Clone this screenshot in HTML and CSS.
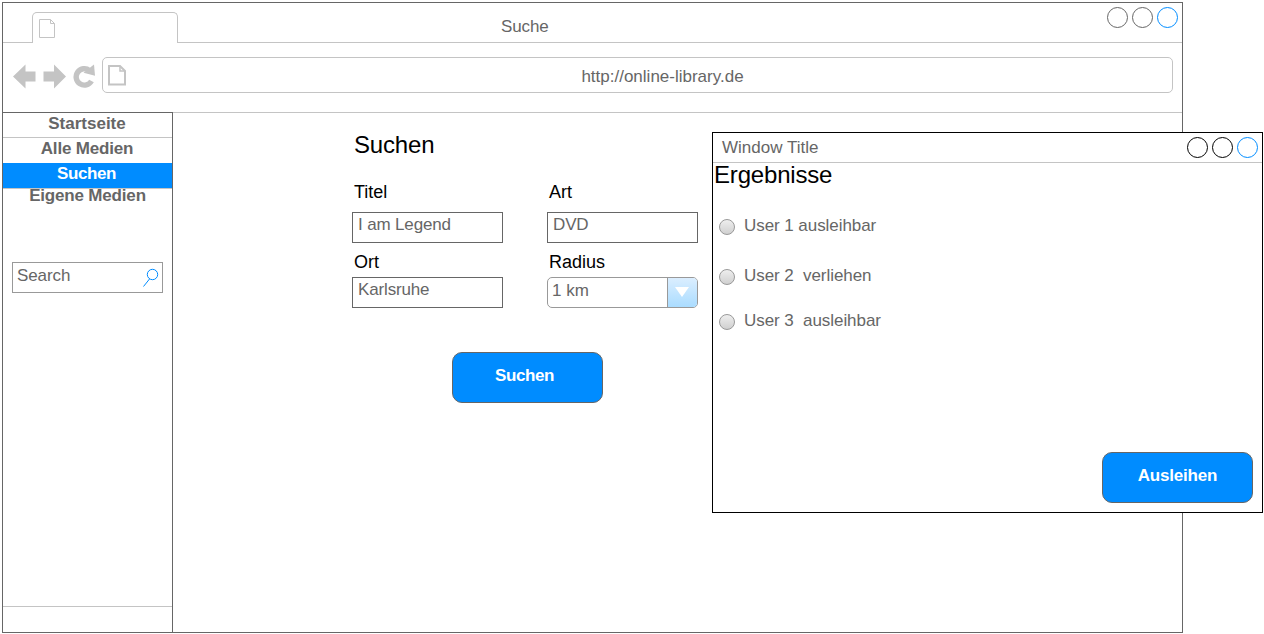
FILE: index.html
```html
<!DOCTYPE html>
<html lang="de">
<head>
<meta charset="utf-8">
<title>Suche</title>
<link rel="stylesheet" href="styles.css">
</head>
<body>
<div class="browser">
  <header class="tabbar">
    <div class="tab-gap"></div>
    <div class="tab">
      <svg width="17" height="20" viewBox="0 0 17 20" fill="none" stroke="#c4c4c4"><path d="M.5.5h11l4 4v14h-15zM11.500.5v4h4"/><path d="m12 1 3 3"/></svg>
    </div>
    <div class="tab-rest">
      <span class="page-title">Suche</span>
      <svg class="controls" width="72" height="22" viewBox="0 0 72 22" fill="none" stroke="#666"><circle cx="11.500" cy="11.500" r="10"/><circle cx="36.500" cy="11.500" r="10"/><circle cx="61.500" cy="11.500" r="10" stroke="#008cff"/></svg>
    </div>
  </header>
  <div class="toolbar">
    <svg class="nav-icons" width="83" height="26" viewBox="0 0 83 26" fill="#c4c4c4">
      <path d="M0 13.500 12.500 1.500v7H22.500v10H12.500v7z"/>
      <path d="M53 13.500 41 1.500v7H30.500v10H41v7z"/>
      <path d="M78.500 18A8.200 8.200 0 1 1 76.500 7.500" fill="none" stroke="#c4c4c4" stroke-width="5.400"/>
      <path d="M81 1.500l1 11.200-11.500-3z"/>
    </svg>
    <div class="address">
      <svg width="18" height="21" viewBox="0 0 18 21" fill="none" stroke="#c4c4c4" stroke-width="2"><path d="M1 1h11l5 5v13.500H1z"/><path d="M12 1v5h5" stroke-width="1.500"/></svg>
      <span class="url">http://online-library.de</span>
    </div>
  </div>
  <div class="main">
    <nav class="sidebar">
      <a class="item first">Startseite</a>
      <a class="item">Alle Medien</a>
      <a class="item active">Suchen</a>
      <a class="item last">Eigene Medien</a>
      <div class="search">
        <span>Search</span>
        <svg width="16" height="20" viewBox="0 0 16 20" fill="none" stroke="#008cff"><circle cx="9.500" cy="6.500" r="5.200"/><path d="M6.500 11 .5 18.500"/></svg>
      </div>
      <div class="sidebar-foot"></div>
    </nav>
    <main class="content">
      <h1 class="heading">Suchen</h1>
      <div class="fields">
        <div class="field"><label class="label">Titel</label><div class="input">I am Legend</div></div>
        <div class="field"><label class="label">Art</label><div class="input">DVD</div></div>
        <div class="field tight"><label class="label">Ort</label><div class="input">Karlsruhe</div></div>
        <div class="field tight"><label class="label">Radius</label>
          <div class="select"><span class="value">1 km</span><span class="arrow"><svg width="14" height="10" viewBox="0 0 14 10" fill="#fff"><path d="M0 0h14L7 10z"/></svg></span></div>
        </div>
      </div>
      <div class="button find">Suchen</div>
    </main>
  </div>
</div>
<section class="window">
  <header class="window-bar">
    <span>Window Title</span>
    <svg class="window-controls" width="72" height="22" viewBox="0 0 72 22" fill="none" stroke="#000"><circle cx="11.500" cy="11.500" r="10"/><circle cx="36.500" cy="11.500" r="10"/><circle cx="61.500" cy="11.500" r="10" stroke="#008cff"/></svg>
  </header>
  <h2 class="result-title">Ergebnisse</h2>
  <div class="results">
    <div class="result"><i class="radio"></i><span>User 1 ausleihbar</span></div>
    <div class="result"><i class="radio"></i><span>User 2  verliehen</span></div>
    <div class="result third"><i class="radio"></i><span>User 3  ausleihbar</span></div>
  </div>
  <div class="button lend">Ausleihen</div>
</section>
</body>
</html>
```
FILE: styles.css
```css
* { box-sizing: border-box; }
body {
  margin: 0;
  padding: 2px;
  width: 1264px;
  height: 634px;
  overflow: hidden;
  background: #fff;
  color: #666;
  font: 17px/22px "Liberation Sans", Arial, sans-serif;
}
svg { display: block; flex: none; }
.browser {
  display: flex;
  flex-direction: column;
  width: 1181px;
  height: 631px;
  border: 1px solid #666;
}
.tabbar { display: flex; height: 40px; }
.tab-gap { width: 29px; border-bottom: 1px solid #c4c4c4; }
.tab {
  width: 146px;
  margin-top: 9px;
  padding: 6px 6px;
  border: 1px solid #c4c4c4;
  border-bottom: 0;
  border-radius: 5px 5px 0 0;
}
.tab-rest {
  flex: 1;
  display: flex;
  justify-content: space-between;
  border-bottom: 1px solid #c4c4c4;
}
.page-title { margin: 13px 0 0 323px; letter-spacing: -.1px; }
.controls { margin: 3px 4px 0 0; }
.toolbar { display: flex; height: 69px; padding: 14px 9px 0 10px; }
.nav-icons { margin-top: 6px; }
.address {
  display: flex;
  width: 1071px;
  height: 36px;
  margin-left: 6px;
  padding: 8px 5px 4px;
  border: 1px solid #c4c4c4;
  border-radius: 5px;
}
.address svg { margin-top: -1px; }
.url { flex: 1; padding-left: 32px; text-align: center; }
.main { flex: 1; display: flex; }
.sidebar {
  display: flex;
  flex-direction: column;
  width: 170px;
  border-top: 1px solid #666;
  border-right: 1px solid #666;
}
.item {
  height: 25px;
  padding-right: 1px;
  text-align: center;
  font-weight: bold;
  letter-spacing: -.18px;
}
.first { border-bottom: 1px solid #c4c4c4; letter-spacing: 0; }
.active {
  padding-right: 2px;
  background: #008cff;
  box-shadow: 0 1px #c4c4c4;
  color: #fff;
  letter-spacing: -.4px;
}
.last { height: 20px; margin-top: -3px; padding-right: 0; }
.search {
  display: flex;
  justify-content: space-between;
  width: 151px;
  height: 31px;
  margin: 57px 0 0 9px;
  padding: 2px 3px 2px 4px;
  border: 1px solid #999;
  letter-spacing: -.1px;
}
.search svg { margin-top: 3px; }
.sidebar-foot { height: 26px; margin-top: auto; border-top: 1px solid #c4c4c4; }
.content { flex: 1; padding: 18px 0 0 179px; border-top: 1px solid #c4c4c4; }
.heading, .result-title {
  margin: 0;
  color: #000;
  font-size: 24px;
  font-weight: normal;
  line-height: 28px;
  letter-spacing: -.18px;
}
.heading { padding-left: 2px; }
.fields {
  display: grid;
  grid-template-columns: 151px 151px;
  column-gap: 44px;
  row-gap: 9px;
  margin-top: 23px;
}
.field { display: flex; flex-direction: column; gap: 10px; }
.tight { gap: 5px; }
.label { padding-left: 2px; color: #000; font-size: 18px; line-height: 20px; }
.input {
  height: 31px;
  padding: 1px 5px;
  border: 1px solid #666;
  letter-spacing: -.15px;
}
.select {
  display: flex;
  height: 31px;
  overflow: hidden;
  border: 1px solid #999;
  border-radius: 5px;
}
.value { flex: 1; padding: 2px 4px; }
.arrow {
  display: flex;
  align-items: center;
  justify-content: center;
  width: 30px;
  padding: 0 2px 1px 0;
  border-left: 1px solid #999;
  background: linear-gradient(#dbeeff, #aadcff);
}
.button {
  width: 151px;
  height: 51px;
  padding-top: 12px;
  border: 1px solid #666;
  border-radius: 10px;
  background: #008cff;
  color: #fff;
  text-align: center;
  font-weight: bold;
  letter-spacing: -.18px;
}
.find {
  margin: 44px 0 0 100px;
  padding-right: 6px;
  letter-spacing: -.4px;
}
.window {
  position: absolute;
  left: 712px;
  top: 132px;
  display: flex;
  flex-direction: column;
  width: 551px;
  height: 381px;
  border: 1px solid #000;
  background: #fff;
}
.window-bar {
  display: flex;
  justify-content: space-between;
  flex: none;
  height: 30px;
  padding: 4px 4px 0 9px;
  border-bottom: 1px solid #c4c4c4;
}
.window-controls { margin-top: -1px; }
.result-title { margin-top: -2px; padding-left: 1px; }
.results { padding: 26px 0 0 6px; }
.result {
  display: flex;
  gap: 9px;
  height: 50px;
  white-space: pre;
  letter-spacing: -.06px;
}
.third { margin-top: -5px; }
.radio {
  width: 16px;
  height: 16px;
  margin-top: 4px;
  border: 1px solid #999;
  border-radius: 50%;
  background: linear-gradient(#eee, #d0d0d0);
}
.lend { margin: auto 9px 9px auto; }
```
